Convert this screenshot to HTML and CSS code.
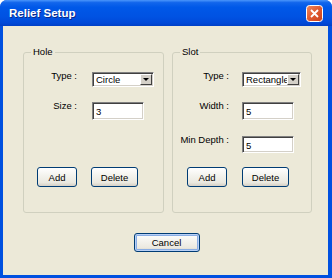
FILE: index.html
```html
<html>
<head>
	<title>Relief Setup</title>
	<link rel="stylesheet" href="styles.css">
</head>
<body>
	<div class="window">
		<div class="titlebar">
			<span class="title">Relief Setup</span>
			<span class="close">
				<svg width="17" height="17" viewBox="0 0 17 17">
					<defs>
						<linearGradient id="closeFill" x1="0" y1="0" x2="1" y2="1">
							<stop offset="0" stop-color="#f08a60" />
							<stop offset="0.5" stop-color="#e05a30" />
							<stop offset="1" stop-color="#c8401c" />
						</linearGradient>
					</defs>
					<rect x="0.5" y="0.5" width="16" height="16" rx="3" fill="url(#closeFill)" stroke="#fff" />
					<path d="M5 5 L12 12 M12 5 L5 12" stroke="#fff" stroke-width="1.8" />
				</svg>
			</span>
		</div>
		<div class="client">
			<div class="groups">
				<div class="group hole">
					<span class="group-title">Hole</span>
					<div class="row first">
						<span class="label">Type :</span>
						<div class="combo wide"><span class="combo-text">Circle</span><span class="arrow"></span></div>
					</div>
					<div class="row second">
						<span class="label">Size :</span>
						<div class="field">3</div>
					</div>
					<div class="buttons">
						<span class="btn add">Add</span>
						<span class="btn del">Delete</span>
					</div>
				</div>
				<div class="group slot">
					<span class="group-title">Slot</span>
					<div class="row first">
						<span class="label">Type :</span>
						<div class="combo"><span class="combo-text">Rectangle</span><span class="arrow"></span></div>
					</div>
					<div class="row second">
						<span class="label">Width :</span>
						<div class="field">5</div>
					</div>
					<div class="row third">
						<span class="label">Min Depth :</span>
						<div class="field short">5</div>
					</div>
					<div class="buttons">
						<span class="btn add">Add</span>
						<span class="btn del">Delete</span>
					</div>
				</div>
			</div>
			<div class="footer">
				<span class="btn cancel">Cancel</span>
			</div>
		</div>
	</div>
</body>
</html>
```

FILE: styles.css
```css
body {
	margin: 0;
	background-color: #ffffff;
	font-family: "Liberation Sans", Arial, sans-serif;
	font-size: 9.5px;
}
.window {
	width: 332px;
	height: 278px;
	display: flex;
	flex-direction: column;
	border-radius: 7px 7px 0 0;
	overflow: hidden;
	background: #0050e0;
}
.titlebar {
	height: 26px;
	flex: none;
	display: flex;
	align-items: center;
	padding: 0 9px;
	background: linear-gradient(#4b96fb 0%, #1266ec 10%, #0058e8 28%, #0052e2 65%, #0049d8 88%, #003fc6 100%);
}
.title {
	flex: 1;
	color: #ffffff;
	font-weight: bold;
	font-size: 11.5px;
	text-shadow: 1px 1px 0 #0a2a8a;
}
.close {
	width: 17px;
	height: 17px;
	display: flex;
}
.client {
	flex: 1;
	margin: 0 4px 3px 3px;
	background-color: #ece9d8;
	display: flex;
	flex-direction: column;
	padding-top: 26px;
}
.groups {
	display: flex;
	gap: 8px;
	padding-left: 20px;
}
.group {
	position: relative;
	box-sizing: border-box;
	height: 161px;
	border: 1px solid #d0d0bf;
	border-radius: 3px;
	display: flex;
	flex-direction: column;
	padding-top: 19px;
	padding-bottom: 25px;
}
.hole { width: 141px; }
.slot { width: 140px; }
.group-title {
	position: absolute;
	top: -7px;
	left: 7px;
	padding: 0 2px;
	line-height: 12px;
	background-color: #ece9d8;
}
.row {
	display: flex;
	align-items: flex-start;
	gap: 15px;
	padding-left: 3px;
}
.slot .row {
	gap: 13px;
	padding-left: 6px;
}
.row.second { margin-top: 15px; }
.row.third { margin-top: 16px; }
.label {
	width: 50px;
	text-align: right;
	line-height: 14px;
	margin-top: -3px;
}
.combo, .field {
	box-sizing: border-box;
	background-color: #ffffff;
	border-top: 1px solid #808080;
	border-left: 1px solid #808080;
	border-right: 1px solid #ffffff;
	border-bottom: 1px solid #ffffff;
	box-shadow: inset 1px 1px 0 #404040, inset -1px -1px 0 #d4d0c8;
}
.combo {
	position: relative;
	width: 59px;
	height: 15px;
	padding: 1px 2px 1px 3px;
	overflow: hidden;
}
.combo.wide { width: 62px; }
.combo-text {
	display: block;
	white-space: nowrap;
	line-height: 11px;
}
/* drop button sits over the end of the text, like the real control */
.arrow {
	position: absolute;
	top: 1px;
	right: 1px;
	width: 12px;
	height: 11px;
	box-sizing: border-box;
	background-color: #d4d0c8;
	border-top: 1px solid #ffffff;
	border-left: 1px solid #ffffff;
	border-right: 1px solid #404040;
	border-bottom: 1px solid #404040;
	display: flex;
	align-items: center;
	justify-content: center;
}
.arrow::after {
	content: "";
	border-left: 3px solid transparent;
	border-right: 3px solid transparent;
	border-top: 3px solid #000000;
}
.field {
	width: 52px;
	height: 18px;
	padding: 3px 3px 0 3px;
	line-height: 12px;
}
.field.short { height: 17px; }
.buttons {
	margin-top: auto;
	display: flex;
	gap: 14px;
	padding-left: 13px;
}
.slot .buttons {
	gap: 15px;
	padding-left: 14px;
}
.btn {
	box-sizing: border-box;
	height: 20px;
	display: flex;
	align-items: center;
	justify-content: center;
	border: 1px solid #003c74;
	border-radius: 3px;
	background: linear-gradient(#ffffff 0%, #f4f3ee 40%, #ebe9e0 80%, #d6d0c5 100%);
	color: #000000;
}
.btn.add { width: 40px; }
.btn.del { width: 47px; }
.footer {
	display: flex;
	justify-content: center;
	margin-top: 20px;
	padding-left: 2px;
}
.btn.cancel {
	width: 66px;
	height: 19px;
	box-shadow: inset 0 0 0 1px #b8d0f6, inset 0 0 0 2px #89ade4;
}
```
